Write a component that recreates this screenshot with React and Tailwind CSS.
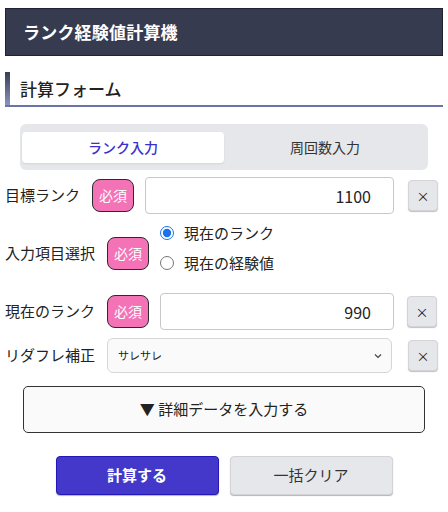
import React from "react";

const font = { fontFamily: '"Noto Sans CJK JP", "Noto Sans", sans-serif' };

function Badge() {
  return (
    <span className="flex h-[33px] w-[42px] shrink-0 items-center justify-center rounded-[8px] border-[1.5px] border-[#2b2b2b] bg-[#f472b6] text-[14px] text-white">
      必須
    </span>
  );
}

function Clear() {
  return (
    <button className="flex h-[31px] w-[30px] shrink-0 items-center justify-center rounded-[4px] border border-[#d4d4d8] bg-[#e5e7eb] text-[13px] text-[#222] shadow-[0_1px_1px_rgba(0,0,0,0.25)]">
      ×
    </button>
  );
}

export default function App() {
  return (
    <div style={font} className="w-[448px] bg-white px-[5px] pt-[8px] text-[#222]">
      <div className="flex h-[48px] items-center border border-[#1f2233] bg-[#373b4f] pl-[17px]">
        <h1 className="text-[17px] font-bold tracking-[0.2px] text-white">ランク経験値計算機</h1>
      </div>

      <div className="mt-[16px] flex h-[35px] items-center border-b-2 border-[#6b74a6]">
        <div className="h-full w-[5px] bg-gradient-to-b from-[#3a3f55] to-[#8b93bf]"></div>
        <h2 className="pl-[10px] text-[17px] font-medium">計算フォーム</h2>
      </div>

      <div className="mx-[15px] mt-[17px] flex h-[46px] gap-0 rounded-[6px] bg-[#e5e7eb] px-[2px] pb-[7px] pt-[8px]">
        <button className="flex flex-1 items-center justify-center rounded-[4px] bg-white text-[14px] font-medium text-[#3b2fd0] shadow-[0_1px_2px_rgba(0,0,0,0.08)]">
          ランク入力
        </button>
        <button className="flex flex-1 items-center justify-center text-[14px] text-[#333]">
          周回数入力
        </button>
      </div>

      <div className="mt-[7px] flex h-[37px] items-center">
        <span className="w-[75px] text-[15px]">目標ランク</span>
        <div className="ml-[12px]"><Badge /></div>
        <input
          readOnly
          value="1100"
          className="ml-[11px] h-[37px] w-[249px] rounded-[4px] border border-[#c8c8c8] bg-white pr-[22px] text-right text-[16px] text-[#222] outline-none"
        />
        <div className="ml-[14px]"><Clear /></div>
      </div>

      <div className="mt-[8px] flex items-start">
        <span className="mt-[20px] w-[90px] text-[15px] leading-[22px]">入力項目選択</span>
        <div className="ml-[12px] mt-[15px]"><Badge /></div>
        <div className="ml-[11px] flex flex-col gap-[8px]">
          <label className="flex h-[22px] items-center">
            <input type="radio" name="m" defaultChecked className="m-0 h-[14px] w-[14px] accent-[#1a73e8]" />
            <span className="ml-[10px] text-[15px]">現在のランク</span>
          </label>
          <label className="flex h-[22px] items-center">
            <input type="radio" name="m" className="m-0 h-[14px] w-[14px]" />
            <span className="ml-[10px] text-[15px]">現在の経験値</span>
          </label>
        </div>
      </div>

      <div className="mt-[19px] flex h-[37px] items-center">
        <span className="w-[90px] text-[15px]">現在のランク</span>
        <div className="ml-[12px]"><Badge /></div>
        <input
          readOnly
          value="990"
          className="ml-[11px] h-[37px] w-[234px] rounded-[4px] border border-[#c8c8c8] bg-white pr-[22px] text-right text-[16px] text-[#222] outline-none"
        />
        <div className="ml-[13px]"><Clear /></div>
      </div>

      <div className="mt-[8px] flex h-[35px] items-center">
        <span className="w-[90px] text-[15px]">リダフレ補正</span>
        <div className="ml-[12px] flex h-[35px] w-[285px] items-center justify-between rounded-[6px] border border-[#d6d6d6] bg-[#fafafa] pl-[10px] pr-[8px]">
          <span className="text-[11px]">サレサレ</span>
          <svg width="10" height="10" viewBox="0 0 10 10" fill="none" stroke="#444" strokeWidth="1.2">
            <path d="M2 3.5 L5 6.5 L8 3.5" />
          </svg>
        </div>
        <div className="ml-[16px]"><Clear /></div>
      </div>

      <div className="mx-[18px] mt-[13px] flex h-[47px] items-center justify-center rounded-[5px] border border-[#333] bg-[#fafafa] text-[15px]">
        ▼ 詳細データを入力する
      </div>

      <div className="mt-[23px] flex justify-center gap-[11px] pb-[16px]">
        <button className="h-[39px] w-[163px] rounded-[4px] border border-[#2417b8] bg-[#4338ca] text-[15px] font-bold text-white shadow-[0_1px_1px_rgba(0,0,0,0.3)]">
          計算する
        </button>
        <button className="h-[39px] w-[163px] rounded-[4px] border border-[#d4d4d8] bg-[#e5e7eb] text-[15px] text-[#333] shadow-[0_1px_1px_rgba(0,0,0,0.3)]">
          一括クリア
        </button>
      </div>
    </div>
  );
}
